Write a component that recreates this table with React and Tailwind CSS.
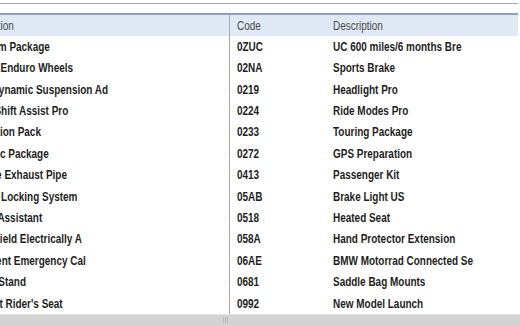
import React from 'react';

const rows = [
  ['Premium Package', '0ZUC', 'UC 600 miles/6 months Bre'],
  ['Forged Enduro Wheels', '02NA', 'Sports Brake'],
  ['BMW Dynamic Suspension Ad', '0219', 'Headlight Pro'],
  ['Quick Shift Assist Pro', '0224', 'Ride Modes Pro'],
  ['Navigation Pack', '0233', 'Touring Package'],
  ['Dynamic Package', '0272', 'GPS Preparation'],
  ['Chrome Exhaust Pipe', '0413', 'Passenger Kit'],
  ['Central Locking System', '05AB', 'Brake Light US'],
  ['Riding Assistant', '0518', 'Heated Seat'],
  ['Windshield Electrically A', '058A', 'Hand Protector Extension'],
  ['Intelligent Emergency Cal', '06AE', 'BMW Motorrad Connected Se'],
  ['Center Stand', '0681', 'Saddle Bag Mounts'],
  ["Comfort Rider's Seat", '0992', 'New Model Launch'],
];

const font = { fontFamily: "'Liberation Sans', Arial, sans-serif" };

// text in the grid is drawn a bit condensed
const txt = 'inline-block whitespace-nowrap origin-left scale-x-[0.83]';

export default function App() {
  return (
    <div className="w-[520px] h-[326px] bg-white overflow-hidden flex flex-col" style={font}>
      <div className="w-[518px] mt-[3px] border-t border-[#a9a9a9] h-[10px]" />
      <div className="w-[518px] flex-1 flex flex-col overflow-hidden">
        {/* header */}
        <div className="flex h-[23px] bg-[#dfe9f6] border-t-2 border-[#8b9fbf] text-[12px] text-[#4a4a4a] shrink-0">
          <div className="w-[230px] overflow-hidden border-r border-[#a9a9a9] flex items-center">
            <span className={`ml-[-36px] ${txt}`}>Description</span>
          </div>
          <div className="w-[96px] pl-[7px] flex items-center">
            <span className={txt}>Code</span>
          </div>
          <div className="flex-1 pl-[7px] flex items-center">
            <span className={txt}>Description</span>
          </div>
        </div>
        {/* body */}
        <div className="flex-1 overflow-hidden">
          {rows.map((r, i) => (
            <div key={i} className="flex h-[21.42px] text-[12px] font-bold text-[#1e1e1e]">
              <div className="w-[230px] overflow-hidden border-r border-[#a9a9a9] flex items-center">
                <span className={`ml-[-36px] ${txt}`}>{r[0]}</span>
              </div>
              <div className="w-[96px] pl-[7px] flex items-center">
                <span className={txt}>{r[1]}</span>
              </div>
              <div className="flex-1 pl-[7px] flex items-center">
                <span className={txt}>{r[2]}</span>
              </div>
            </div>
          ))}
        </div>
      </div>
      {/* horizontal scrollbar */}
      <div className="h-[12px] shrink-0 bg-[#d3d3d3] border-t border-[#e4e4e4] flex justify-center">
        <div className="mt-[2px] ml-[-70px] flex gap-[1px]">
          <div className="w-[1px] h-[6px] bg-[#b8b8b8]" />
          <div className="w-[1px] h-[6px] bg-[#b8b8b8]" />
          <div className="w-[1px] h-[6px] bg-[#b8b8b8]" />
        </div>
      </div>
    </div>
  );
}
